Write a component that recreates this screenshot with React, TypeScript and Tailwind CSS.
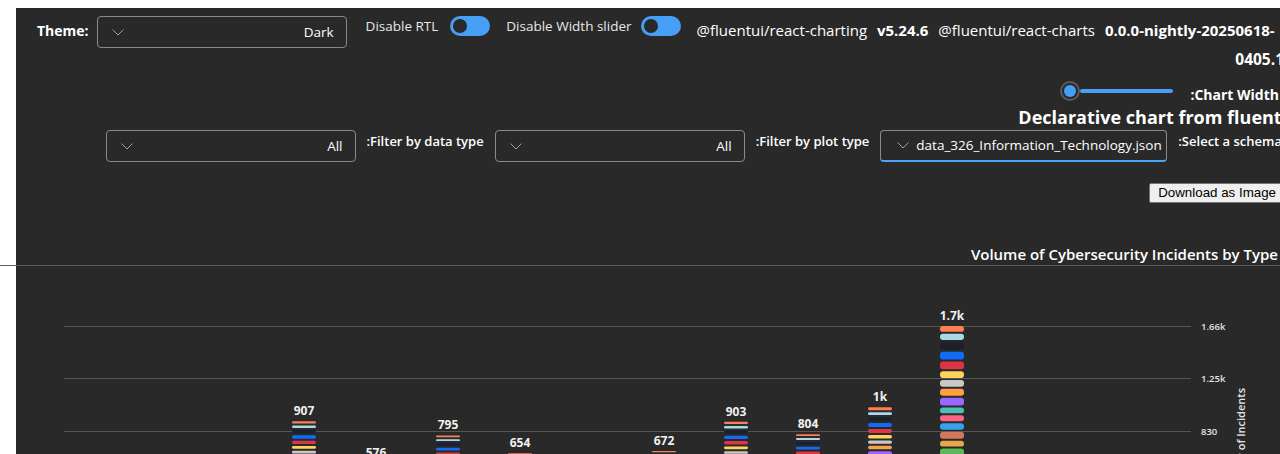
import React from "react";

const palette = [
  "#ff7f50", "#a9d8e6", "#1d2029", "#0f6cf5", "#dc3545", "#ffd25c", "#c8c8c8", "#ffa040",
  "#9966ff", "#4bc0b8", "#ff6384", "#36a2eb", "#d4775f", "#e8a64a", "#5cb85c", "#8e5ea2",
  "#3cba9f", "#e8c3b9", "#c45850", "#7fb3d5", "#f4d03f", "#a569bd", "#48c9b0", "#eb984e",
];

const weights = [8, 8.3, 10, 10, 10, 9, 8.7, 9.3, 10, 8, 8, 8.7, 9.3, 8, 9, 8.5, 9.5, 8, 9, 10, 8.6, 9.2, 8.4, 9.1];
const weightSum = weights.reduce((a, b) => a + b, 0);

const bars = [420, 380, 490, 907, 576, 795, 654, 450, 672, 903, 804, 1017, 1660, 480, 350, 410];

const scale = 0.1265;
const baseline = 270;

function label(v: number) {
  if (v >= 1000) {
    const k = Math.round(v / 100) / 10;
    return `${k}k`;
  }
  return `${v}`;
}

function Chevron() {
  return (
    <svg width="12" height="7" viewBox="0 0 12 7" className="shrink-0">
      <polyline points="0.5,0.5 6,6 11.5,0.5" fill="none" stroke="#a0a0a0" strokeWidth="1" />
    </svg>
  );
}

function Dropdown({ value, className }: { value: string; className: string }) {
  return (
    <div className={`${className} h-8 shrink-0 rounded border border-[#8a8a8a] flex items-center pl-[14px] pr-[12px]`}>
      <Chevron />
      <span className="ml-auto text-[13.5px] text-white">{value}</span>
    </div>
  );
}

function Toggle() {
  return (
    <div className="w-10 h-5 shrink-0 rounded-full bg-[#479ef5] flex items-center pl-[3px]">
      <div className="w-[14px] h-[14px] rounded-full bg-[#292929]" />
    </div>
  );
}

function Chart() {
  return (
    <svg width="1264" height="300" className="block">
      {[60, 112, 165].map((y) => (
        <line key={y} x1="48" x2="1175" y1={y + 0.5} y2={y + 0.5} stroke="#555555" strokeWidth="1" />
      ))}
      {[
        { y: 60, t: "1.66k" },
        { y: 112, t: "1.25k" },
        { y: 165, t: "830" },
      ].map((tk) => (
        <text key={tk.t} x="1185" y={tk.y + 3.5} fill="#e6e6e6" fontSize="9.5" fontWeight="600">
          {tk.t}
        </text>
      ))}
      <text
        x="1229"
        y="122"
        transform="rotate(-90 1229 122)"
        textAnchor="end"
        fill="#e6e6e6"
        fontSize="11"
        fontWeight="600"
      >
        Number of Incidents
      </text>
      {bars.map((v, i) => {
        const cx = 72 + 72 * i;
        const total = v * scale;
        let y = baseline - total;
        const top = y;
        return (
          <g key={i}>
            {weights.map((w, j) => {
              const h = (total * w) / weightSum;
              const segY = y;
              y += h;
              const rh = Math.max(h - 2, 1);
              return (
                <rect
                  key={j}
                  x={cx - 12}
                  y={segY}
                  width="24"
                  height={rh}
                  rx={Math.min(3, rh / 2)}
                  fill={palette[j]}
                />
              );
            })}
            <text x={cx} y={top - 6} textAnchor="middle" fill="#f0f0f0" fontSize="12" fontWeight="700">
              {label(v)}
            </text>
          </g>
        );
      })}
    </svg>
  );
}

export default function App() {
  return (
    <div className="w-[1280px] h-[454px] overflow-hidden bg-white pt-2 pl-4 font-['Open_Sans',sans-serif]">
      <div className="w-[1268px] bg-[#292929] text-white min-h-[620px]">
        {/* Top controls */}
        <div className="flex items-start pt-2 pl-[21px]">
          <span className="mt-[5px] text-[14px] font-bold leading-5">Theme:</span>
          <Dropdown value="Dark" className="ml-2 w-[250px]" />
          <span className="ml-[19px] text-[13.5px] leading-5 text-[#e8e8e8]">Disable RTL</span>
          <div className="ml-3"><Toggle /></div>
          <span className="ml-4 text-[13.5px] leading-5 text-[#e8e8e8]">Disable Width slider</span>
          <div className="ml-[9px]"><Toggle /></div>
          <div className="ml-4 flex-1 text-right text-[15px] leading-[29px] whitespace-nowrap">
            <span className="float-left">
              @fluentui/react-charting <b className="ml-[6px]">v5.24.6</b>
              <span className="ml-[10px]">@fluentui/react-charts</span>
              <b className="ml-[10px]">0.0.0-nightly-20250618-</b>
            </span>
            <br />
            <b className="text-[15.5px]">0405.1</b>
          </div>
        </div>

        {/* Width slider */}
        <div className="flex justify-end items-center mt-[2px]">
          <div className="flex items-center">
            <div className="w-5 h-5 rounded-full border-2 border-[#5a5a5a] flex items-center justify-center">
              <div className="w-3 h-3 rounded-full bg-[#479ef5]" />
            </div>
            <div className="w-[93px] h-1 rounded-full bg-[#479ef5]" />
          </div>
          <span className="ml-[17px] mr-[5px] mt-2 text-[14px] font-bold">:Chart Width</span>
        </div>

        <div className="flex justify-end">
          <h1 className="-mr-[15px] whitespace-nowrap text-[18px] font-bold leading-6">Declarative chart from fluentui</h1>
        </div>

        {/* Filters */}
        <div className="flex justify-end items-start gap-[11px] mt-[1px] whitespace-nowrap">
          <Dropdown value="All" className="w-[250px]" />
          <span className="mt-[2px] text-[13px] font-semibold">:Filter by data type</span>
          <Dropdown value="All" className="w-[250px]" />
          <span className="mt-[2px] text-[13px] font-semibold">:Filter by plot type</span>
          <div className="w-[287px] h-8 shrink-0 rounded border border-[#8a8a8a] border-b-2 border-b-[#4da3f5] flex items-center pl-4 pr-3">
            <Chevron />
            <span className="ml-[7px] text-[13.5px]">data_326_Information_Technology.json</span>
          </div>
          <span className="mt-[2px] mr-[2px] text-[13px] font-semibold">:Select a schema</span>
        </div>

        <div className="flex justify-end mt-[21px]">
          <button className="-mr-px h-5 px-2 rounded-[2px] border border-[#767676] bg-[#efefef] text-black text-[13.33px] leading-none font-['Liberation_Sans',Arial,sans-serif]">
            Download as Image
          </button>
        </div>

        <div className="flex justify-end mt-[41px]">
          <h2 className="mr-[6px] text-[15px] font-semibold leading-5">Volume of Cybersecurity Incidents by Type</h2>
        </div>

        <div className="-ml-4 w-[1296px] mt-[1px] border-t border-[#5c5c5c]" />

        <Chart />
      </div>
    </div>
  );
}
